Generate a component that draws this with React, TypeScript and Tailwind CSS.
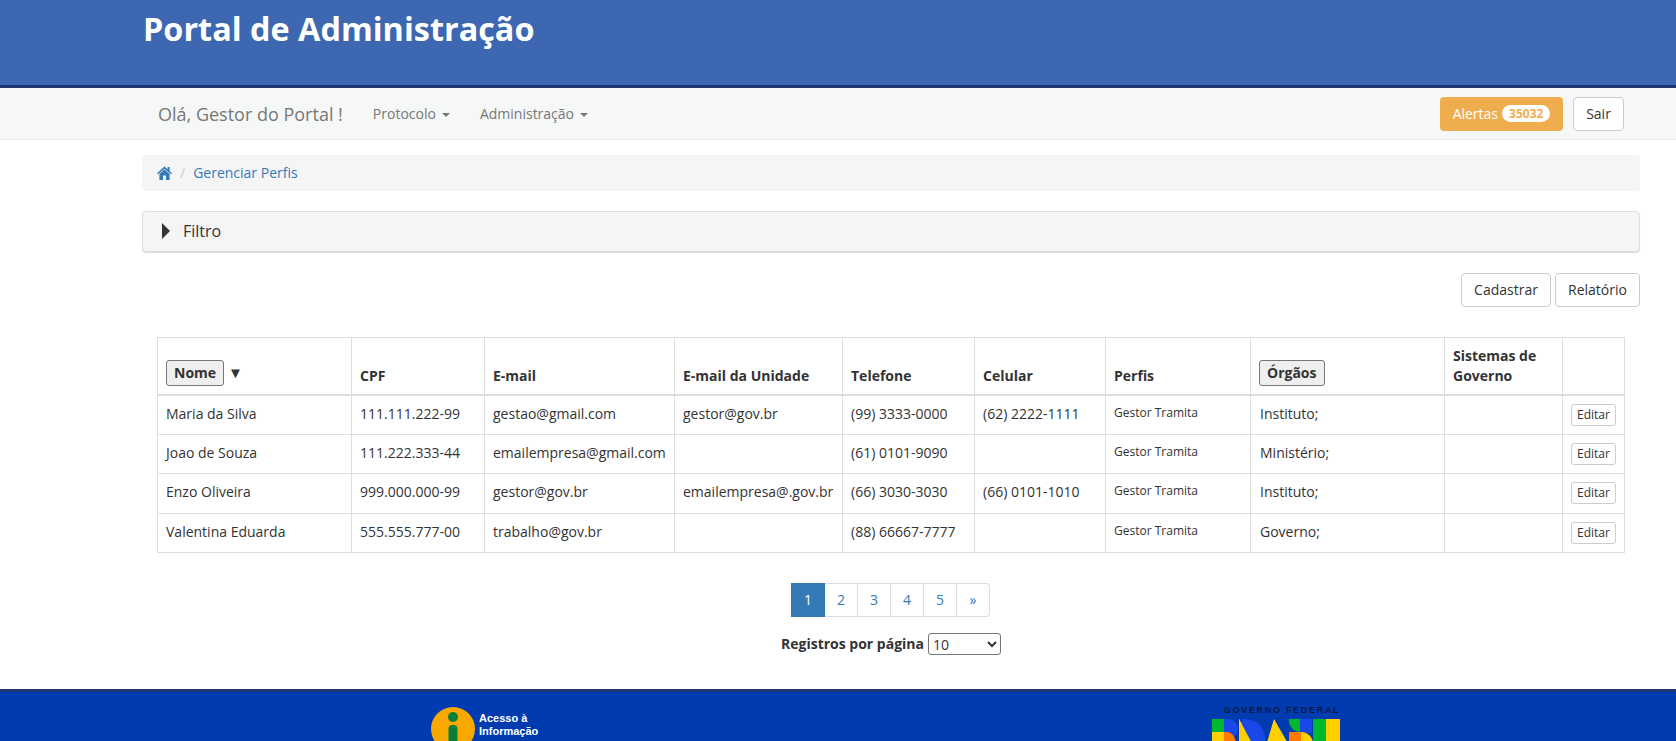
import React from 'react';

const font = { fontFamily: '"Open Sans", sans-serif' };

const pessoas = [
  { nome: 'Maria da Silva', cpf: '111.111.222-99', email: 'gestao@gmail.com', unidade: 'gestor@gov.br', tel: '(99) 3333-0000', cel: '(62) 2222-1111', orgao: 'Instituto;' },
  { nome: 'Joao de Souza', cpf: '111.222.333-44', email: 'emailempresa@gmail.com', unidade: '', tel: '(61) 0101-9090', cel: '', orgao: 'Ministério;' },
  { nome: 'Enzo Oliveira', cpf: '999.000.000-99', email: 'gestor@gov.br', unidade: 'emailempresa@.gov.br', tel: '(66) 3030-3030', cel: '(66) 0101-1010', orgao: 'Instituto;' },
  { nome: 'Valentina Eduarda', cpf: '555.555.777-00', email: 'trabalho@gov.br', unidade: '', tel: '(88) 66667-7777', cel: '', orgao: 'Governo;' },
];

const Caret = () => (
  <span className="inline-block ml-[6px] align-middle w-0 h-0 border-x-[4px] border-x-transparent border-t-[4px] border-t-[#777]" />
);

const td = 'border border-[#ddd] h-[39.4px] px-2 pt-2 pb-[9px] align-top';
const th = 'border border-[#ddd] border-b-2 px-2 pt-2 pb-2 align-bottom text-left font-bold';
const sortBtn = 'bg-[#efefef] border border-[#767676] rounded-[3px] px-[7px] h-[26px] font-bold text-[14px] text-[#333]';

function HomeIcon() {
  return (
    <svg width="15" height="14" viewBox="0 0 15 14" className="block">
      <path d="M7.5 0.5 L0 7.3 L1 8.2 L7.5 2.8 L14 8.2 L15 7.3 L12.6 5.1 V1 H10.6 V3.2 Z" fill="#337ab7" />
      <path d="M2.4 8 L7.5 3.6 L12.6 8 V14 H9 V9.6 H6 V14 H2.4 Z" fill="#337ab7" />
    </svg>
  );
}

function AcessoInfo() {
  return (
    <div className="flex items-start gap-[4px]">
      <svg width="44" height="44" viewBox="0 0 44 44" className="shrink-0">
        <circle cx="22" cy="22" r="22" fill="#f9a800" />
        <circle cx="22" cy="10" r="5" fill="#0b7d3a" />
        <rect x="17.5" y="18" width="9" height="22" rx="4" fill="#0b7d3a" />
      </svg>
      <div className="pt-[5px] text-white text-[11px] leading-[13px] font-bold" style={{ fontFamily: '"Liberation Sans", sans-serif' }}>
        Acesso à
        <br />
        Informação
      </div>
    </div>
  );
}

function MarcaBrasil() {
  return (
    <div className="flex flex-col items-end w-[128px]">
      <span className="text-[#0b1a40] text-[9px] leading-[10px] font-bold tracking-[1.7px] whitespace-nowrap" style={{ fontFamily: '"Liberation Sans", sans-serif' }}>
        GOVERNO FEDERAL
      </span>
      <svg width="128" height="40" viewBox="0 0 128 40" className="mt-[4px] block">
        <rect x="0" y="0" width="12" height="13" fill="#00b82d" />
        <rect x="0" y="13" width="12" height="27" fill="#ffd000" />
        <path d="M12 0 H16 A10 10 0 0 1 16 20 H12 Z" fill="#1a47e8" />
        <path d="M12 13 H14 A9 13 0 0 1 24 26 H12 Z" fill="#ff7a00" />
        <path d="M27 0 L50 40 H27 Z" fill="#ffd000" />
        <path d="M30 0 H33 A20 20 0 0 1 33 40 H30 Z" fill="#1a47e8" />
        <path d="M27 0 L42 28 H27 Z" fill="#ffd000" />
        <path d="M62 0 L85 40 H50 Z" fill="#ffd000" />
        <path d="M89 13 A12 12 0 0 1 77 0 H89 Z" fill="#00b82d" />
        <rect x="88" y="0" width="12" height="14" fill="#1a47e8" />
        <rect x="77" y="13" width="12" height="27" fill="#ff7a00" />
        <path d="M89 13 A12 12 0 0 1 101 26 H89 Z" fill="#ffd000" />
        <rect x="101" y="0" width="13" height="40" fill="#00b82d" />
        <rect x="114" y="0" width="14" height="40" fill="#ffd000" />
      </svg>
    </div>
  );
}

export default function App() {
  return (
    <div className="h-screen overflow-hidden bg-white text-[#333] text-[14px] leading-[20px]" style={font}>
      <header className="h-[88px] bg-[#3d67b0] border-b-[3px] border-[#1f3671] pl-[143px]">
        <h1 className="pt-[8px] text-white text-[32.4px] leading-[40px] font-bold">Portal de Administração</h1>
      </header>

      <nav className="h-[52px] bg-[#f6f8f8] border-b border-[#e7e7e7] pl-[158px] pr-[52px] flex items-center">
        <span className="text-[18px] text-[#777]">Olá, Gestor do Portal !</span>
        <span className="ml-[30px] text-[#777]">Protocolo<Caret /></span>
        <span className="ml-[30px] text-[#777]">Administração<Caret /></span>
        <button className="ml-auto h-[34px] w-[123px] bg-[#f0ad4e] rounded-[4px] text-white flex items-center justify-center">
          Alertas
          <span className="ml-[4px] h-[17px] px-[7px] rounded-[10px] bg-white text-[#f0ad4e] text-[12px] leading-[17px] font-bold">35032</span>
        </button>
        <button className="ml-[10px] h-[34px] w-[51px] bg-white border border-[#ccc] rounded-[4px] text-[#333]">Sair</button>
      </nav>

      <main className="pl-[142px] pr-[36px] pt-[15px]">
        <div className="h-[36px] bg-[#f5f5f5] rounded-[4px] pl-[15px] pb-[1px] flex items-center">
          <HomeIcon />
          <span className="mx-[8px] text-[#ccc]">/</span>
          <span className="text-[#337ab7]">Gerenciar Perfis</span>
        </div>

        <div className="mt-[20px] h-[41px] bg-[#f5f5f5] border border-[#ddd] rounded-[4px] shadow-[0_1px_1px_rgba(0,0,0,0.15)] pl-[19px] pb-[2px] flex items-center">
          <span className="w-0 h-0 border-y-[8px] border-y-transparent border-l-[8px] border-l-[#333]" />
          <span className="ml-[13px] text-[16px] text-[#333]">Filtro</span>
        </div>

        <div className="mt-[21px] flex justify-end gap-[4px]">
          <button className="h-[34px] w-[90px] bg-white border border-[#ccc] rounded-[4px]">Cadastrar</button>
          <button className="h-[34px] w-[85px] bg-white border border-[#ccc] rounded-[4px]">Relatório</button>
        </div>

        <div className="mt-[30px] px-[15px]">
          <table className="w-[1467px] table-fixed border-collapse">
            <colgroup>
              <col className="w-[194px]" />
              <col className="w-[133px]" />
              <col className="w-[190px]" />
              <col className="w-[168px]" />
              <col className="w-[132px]" />
              <col className="w-[131px]" />
              <col className="w-[145px]" />
              <col className="w-[194px]" />
              <col className="w-[118px]" />
              <col className="w-[62px]" />
            </colgroup>
            <thead>
              <tr>
                <th className={th}>
                  <div className="flex items-center gap-[4px]">
                    <button className={sortBtn}>Nome</button>
                    <span className="text-[15px] leading-[20px] mb-[2px]">▼</span>
                  </div>
                </th>
                <th className={th}>CPF</th>
                <th className={th}>E-mail</th>
                <th className={th}>E-mail da Unidade</th>
                <th className={th}>Telefone</th>
                <th className={th}>Celular</th>
                <th className={th}>Perfis</th>
                <th className={th}>
                  <div className="flex items-center">
                    <button className={sortBtn}>Órgãos</button>
                  </div>
                </th>
                <th className={th}>Sistemas de Governo</th>
                <th className={th}></th>
              </tr>
            </thead>
            <tbody>
              {pessoas.map((p) => (
                <tr key={p.cpf}>
                  <td className={td}>{p.nome}</td>
                  <td className={td}>{p.cpf}</td>
                  <td className={td}>{p.email}</td>
                  <td className={`${td} whitespace-nowrap`}>{p.unidade}</td>
                  <td className={td}>{p.tel}</td>
                  <td className={td}>{p.cel}</td>
                  <td className={`${td} text-[12px] leading-[18px]`}>Gestor Tramita</td>
                  <td className={`${td} !pl-[9px]`}>{p.orgao}</td>
                  <td className={td}></td>
                  <td className={`${td} !pb-0`}>
                    <button className="block h-[22px] w-[45px] bg-white border border-[#ccc] rounded-[3px] text-[12px] leading-[18px] text-[#333]">Editar</button>
                  </td>
                </tr>
              ))}
            </tbody>
          </table>
        </div>

        <div className="mt-[30px] flex justify-center pr-[2px]">
          <div className="flex h-[34px] text-[#337ab7]">
            <span className="w-[34px] pl-[1px] bg-[#337ab7] text-white flex items-center justify-center">1</span>
            {['2', '3', '4', '5'].map((n) => (
              <span key={n} className="w-[33px] pl-[1px] border border-l-0 border-[#ddd] flex items-center justify-center">{n}</span>
            ))}
            <span className="w-[33px] pl-[1px] border border-l-0 border-[#ddd] rounded-r-[4px] flex items-center justify-center">»</span>
          </div>
        </div>

        <div className="mt-[16px] flex justify-center items-center">
          <label className="font-bold">Registros por página</label>
          <select defaultValue="10" className="ml-[4px] w-[73px] h-[22px] bg-white border border-[#767676] rounded-[3px] text-[14px] text-[#333]">
            <option>10</option>
            <option>20</option>
            <option>50</option>
          </select>
        </div>
      </main>

      <footer className="mt-[34px] h-[160px] bg-[#003cb0] border-t-[3px] border-[#1f3671] flex">
        <div className="ml-[431px] mt-[15px]"><AcessoInfo /></div>
        <div className="ml-[674px] mt-[13px]"><MarcaBrasil /></div>
      </footer>
    </div>
  );
}
